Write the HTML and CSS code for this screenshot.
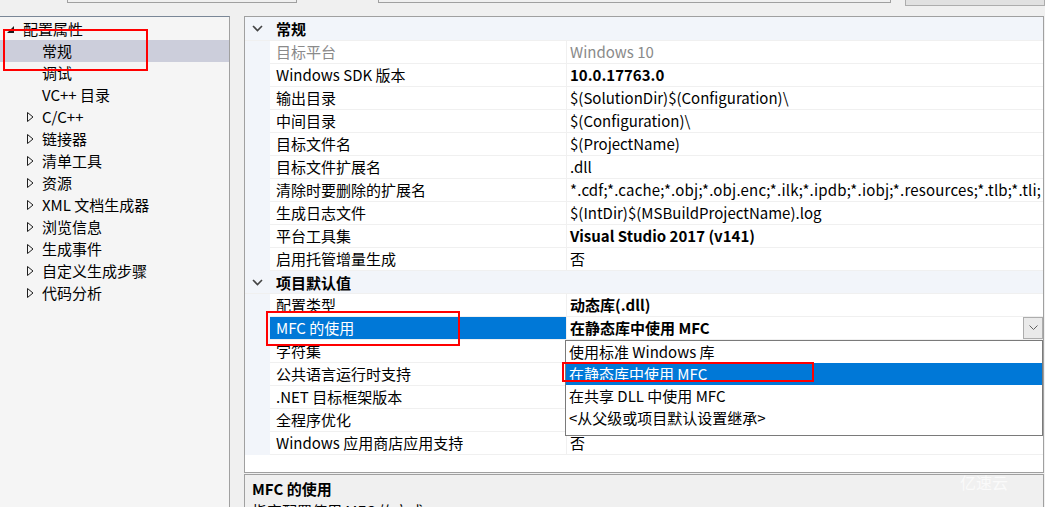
FILE: index.html
```html
<!DOCTYPE html>
<html lang="zh-CN">
<head>
    <meta charset="UTF-8">
    <title>属性页</title>
    <link rel="stylesheet" href="styles.css">
</head>
<body>
    <div class="topbar">
        <div class="top-box box-a"></div>
        <div class="top-box box-b"></div>
        <div class="top-btn"></div>
    </div>

    <div class="main">
        <!-- 左侧配置树 -->
        <div class="tree">
            <div class="tree-row root">
                <svg class="exp-open" width="8" height="8" viewBox="0 0 8 8"><polygon points="7,0 7,7 0,7" fill="#1e1e1e"/></svg>
                配置属性
            </div>
            <div class="tree-row leaf selected">常规</div>
            <div class="tree-row leaf">调试</div>
            <div class="tree-row leaf">VC++ 目录</div>
            <div class="tree-row node"><svg class="exp" width="7" height="10" viewBox="0 0 7 10"><polygon points="0.5,0.5 6,5 0.5,9.5" fill="none" stroke="#1e1e1e" stroke-width="1"/></svg>C/C++</div>
            <div class="tree-row node"><svg class="exp" width="7" height="10" viewBox="0 0 7 10"><polygon points="0.5,0.5 6,5 0.5,9.5" fill="none" stroke="#1e1e1e" stroke-width="1"/></svg>链接器</div>
            <div class="tree-row node"><svg class="exp" width="7" height="10" viewBox="0 0 7 10"><polygon points="0.5,0.5 6,5 0.5,9.5" fill="none" stroke="#1e1e1e" stroke-width="1"/></svg>清单工具</div>
            <div class="tree-row node"><svg class="exp" width="7" height="10" viewBox="0 0 7 10"><polygon points="0.5,0.5 6,5 0.5,9.5" fill="none" stroke="#1e1e1e" stroke-width="1"/></svg>资源</div>
            <div class="tree-row node"><svg class="exp" width="7" height="10" viewBox="0 0 7 10"><polygon points="0.5,0.5 6,5 0.5,9.5" fill="none" stroke="#1e1e1e" stroke-width="1"/></svg>XML 文档生成器</div>
            <div class="tree-row node"><svg class="exp" width="7" height="10" viewBox="0 0 7 10"><polygon points="0.5,0.5 6,5 0.5,9.5" fill="none" stroke="#1e1e1e" stroke-width="1"/></svg>浏览信息</div>
            <div class="tree-row node"><svg class="exp" width="7" height="10" viewBox="0 0 7 10"><polygon points="0.5,0.5 6,5 0.5,9.5" fill="none" stroke="#1e1e1e" stroke-width="1"/></svg>生成事件</div>
            <div class="tree-row node"><svg class="exp" width="7" height="10" viewBox="0 0 7 10"><polygon points="0.5,0.5 6,5 0.5,9.5" fill="none" stroke="#1e1e1e" stroke-width="1"/></svg>自定义生成步骤</div>
            <div class="tree-row node"><svg class="exp" width="7" height="10" viewBox="0 0 7 10"><polygon points="0.5,0.5 6,5 0.5,9.5" fill="none" stroke="#1e1e1e" stroke-width="1"/></svg>代码分析</div>
        </div>

        <div class="right">
            <!-- 属性网格 -->
            <div class="grid">
                <div class="cat cat-first">
                    <svg class="chev" width="11" height="7" viewBox="0 0 11 7"><polyline points="1,1 5.5,5.5 10,1" fill="none" stroke="#444" stroke-width="1.6"/></svg>
                    常规
                </div>
                <div class="row"><div class="name dim">目标平台</div><div class="value dim">Windows 10</div></div>
                <div class="row"><div class="name">Windows SDK 版本</div><div class="value bold">10.0.17763.0</div></div>
                <div class="row"><div class="name">输出目录</div><div class="value">$(SolutionDir)$(Configuration)\</div></div>
                <div class="row"><div class="name">中间目录</div><div class="value">$(Configuration)\</div></div>
                <div class="row"><div class="name">目标文件名</div><div class="value">$(ProjectName)</div></div>
                <div class="row"><div class="name">目标文件扩展名</div><div class="value">.dll</div></div>
                <div class="row"><div class="name">清除时要删除的扩展名</div><div class="value wide">*.cdf;*.cache;*.obj;*.obj.enc;*.ilk;*.ipdb;*.iobj;*.resources;*.tlb;*.tli;</div></div>
                <div class="row"><div class="name">生成日志文件</div><div class="value">$(IntDir)$(MSBuildProjectName).log</div></div>
                <div class="row"><div class="name">平台工具集</div><div class="value bold">Visual Studio 2017 (v141)</div></div>
                <div class="row"><div class="name">启用托管增量生成</div><div class="value">否</div></div>

                <div class="cat">
                    <svg class="chev" width="11" height="7" viewBox="0 0 11 7"><polyline points="1,1 5.5,5.5 10,1" fill="none" stroke="#444" stroke-width="1.6"/></svg>
                    项目默认值
                </div>
                <div class="row"><div class="name">配置类型</div><div class="value bold">动态库(.dll)</div></div>
                <div class="row active">
                    <div class="name">MFC 的使用</div>
                    <div class="value bold combo">
                        <span>在静态库中使用 MFC</span>
                        <span class="combo-btn">
                            <svg width="9" height="6" viewBox="0 0 9 6"><polyline points="0.5,0.5 4.5,4.5 8.5,0.5" fill="none" stroke="#606060" stroke-width="1"/></svg>
                        </span>
                    </div>
                </div>
                <div class="row"><div class="name">字符集</div><div class="value"></div></div>
                <div class="row"><div class="name">公共语言运行时支持</div><div class="value"></div></div>
                <div class="row"><div class="name">.NET 目标框架版本</div><div class="value"></div></div>
                <div class="row"><div class="name">全程序优化</div><div class="value"></div></div>
                <div class="row"><div class="name">Windows 应用商店应用支持</div><div class="value">否</div></div>

                <div class="dropdown">
                    <div class="option">使用标准 Windows 库</div>
                    <div class="option picked">在静态库中使用 MFC</div>
                    <div class="option">在共享 DLL 中使用 MFC</div>
                    <div class="option">&lt;从父级或项目默认设置继承&gt;</div>
                </div>
            </div>

            <div class="desc">
                <div class="desc-title">MFC 的使用</div>
                <div class="desc-text">指定配置使用 MFC 的方式。</div>
            </div>
        </div>
    </div>

    <div class="watermark">亿速云</div>

    <!-- 红色标注框 -->
    <div class="mark mark-tree"></div>
    <div class="mark mark-name"></div>
    <div class="mark mark-option"></div>
</body>
</html>
```

FILE: styles.css
```css
* {
    margin: 0;
    padding: 0;
    box-sizing: border-box;
}

body {
    width: 1045px;
    height: 507px;
    overflow: hidden;
    background-color: #f0f0f0;
    font-family: "Noto Sans CJK SC", sans-serif;
    font-size: 15px;
    color: #000;
    position: relative;
}

.topbar {
    height: 16px;
    display: flex;
    align-items: flex-start;
}

.top-box {
    height: 3px;
    border: 1px solid #a0a0a0;
    border-top: none;
    background-color: #f0f0f0;
}

.box-a {
    margin-left: 67px;
    width: 230px;
}

.box-b {
    margin-left: 81px;
    width: 513px;
}

.top-btn {
    margin-left: 14px;
    width: 140px;
    height: 6px;
    background-color: #e1e1e1;
    border: 1px solid #adadad;
    border-top: none;
}

.main {
    display: flex;
    gap: 14px;
    height: 491px;
}

/* tree */
.tree {
    width: 230px;
    height: 100%;
    background-color: #f5f5f5;
    border-top: 1px solid #7a8797;
    border-right: 1px solid #a0a0a0;
    padding-top: 1px;
}

.tree-row {
    height: 22px;
    line-height: 22px;
    display: flex;
    align-items: center;
    white-space: nowrap;
}

.tree-row.root {
    padding-left: 7px;
}

.tree-row.root .exp-open {
    margin-right: 8px;
    margin-top: 1px;
}

.tree-row.leaf {
    padding-left: 42px;
}

.tree-row.node {
    padding-left: 27px;
}

.tree-row.node .exp {
    margin-right: 8px;
}

.tree-row.selected {
    background-color: #cccedb;
}

/* property grid */
.right {
    width: 800px;
    height: 100%;
    display: flex;
    flex-direction: column;
    gap: 1px;
}

.grid {
    position: relative;
    flex-shrink: 0;
    height: 457px;
    border: 1px solid #a0a0a0;
    background-color: #fff;
}

.cat {
    height: 23px;
    display: flex;
    align-items: center;
    background-color: #f2f5fa;
    font-weight: bold;
    border-bottom: 1px solid #f0f0f0;
}

.cat-first {
    height: 24px;
}

.cat .chev {
    margin-left: 7px;
    margin-right: 13px;
}

.row {
    height: 23px;
    display: flex;
    background-color: #f2f5fa;
    padding-left: 25px;
}

.row .name,
.row .value {
    line-height: 22px;
    height: 23px;
    background-color: #fff;
    border-bottom: 1px solid #f0f0f0;
    white-space: nowrap;
    overflow: hidden;
}

.row .name {
    width: 296px;
    padding-left: 6px;
}

.row .value {
    flex: 1;
    border-left: 1px solid #f0f0f0;
    padding-left: 3px;
}

.row .value.wide {
    letter-spacing: 0.2px;
}

.dim {
    color: #8a8a8a;
}

.bold {
    font-weight: bold;
}

.row.active .name {
    background-color: #0078d7;
    color: #fff;
}

.combo {
    display: flex;
    justify-content: space-between;
}

.combo-btn {
    width: 20px;
    height: 22px;
    border: 1px solid #adadad;
    background-color: #eaeaea;
    display: flex;
    align-items: center;
    justify-content: center;
}

.dropdown {
    position: absolute;
    left: 320px;
    top: 323px;
    width: 478px;
    height: 96px;
    background-color: #fff;
    border: 1px solid #7a7a7a;
}

.option {
    height: 22px;
    line-height: 22px;
    padding-left: 3px;
    white-space: nowrap;
}

.option.picked {
    background-color: #0078d7;
    color: #fff;
}

/* description */
.desc {
    flex: 1;
    min-height: 0;
    overflow: hidden;
    border: 1px solid #a0a0a0;
    border-bottom: none;
    background-color: #f0f0f0;
    padding: 3px 7px 0;
}

.desc-title {
    font-weight: bold;
    line-height: 22px;
}

.desc-text {
    line-height: 22px;
}

.watermark {
    position: absolute;
    left: 960px;
    top: 470px;
    font-size: 16px;
    color: rgba(255, 255, 255, 0.7);
}

.mark {
    position: absolute;
    border: 2px solid #f00;
}

.mark-tree {
    left: 3px;
    top: 29px;
    width: 145px;
    height: 42px;
}

.mark-name {
    left: 266px;
    top: 311px;
    width: 194px;
    height: 35px;
}

.mark-option {
    left: 562px;
    top: 362px;
    width: 252px;
    height: 20px;
}
```
